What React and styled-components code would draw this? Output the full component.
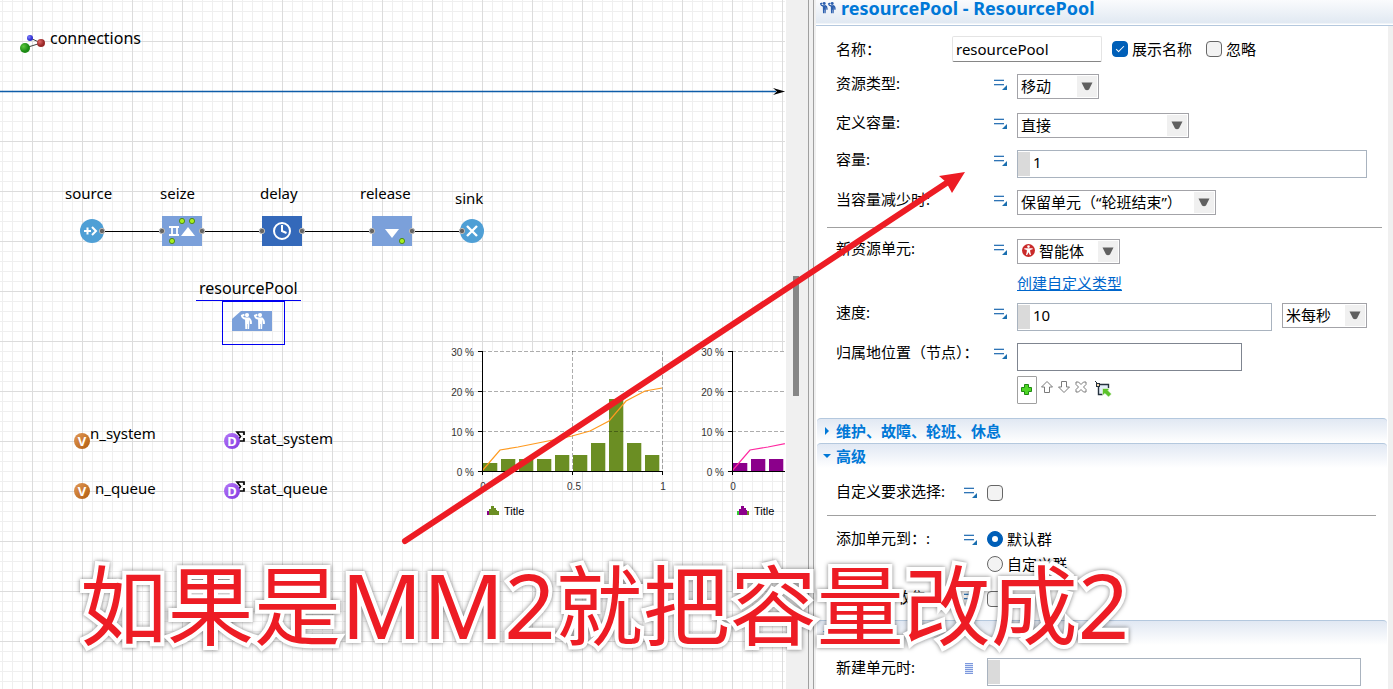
import React from "react";
import styled, { createGlobalStyle } from "styled-components";

const GlobalStyle = createGlobalStyle`
  *, *::before, *::after { box-sizing: border-box; }
  body {
    margin: 0;
    background: #fff;
    color: #000;
    font: 15px/20px "Noto Sans", "Noto Sans CJK SC", sans-serif;
  }
`;

const Workspace = styled.div`
  position: relative;
  display: flex;
  height: 100vh;
  overflow: hidden;
`;

/* ---------- model canvas ---------- */

const Canvas = styled.main`
  position: relative;
  flex: 785 1 0;
  min-width: 0;
  overflow: hidden;
  background-color: #fff;
  background-image:
    linear-gradient(to right, #dcdcdc 1px, transparent 1px),
    linear-gradient(to bottom, #dcdcdc 1px, transparent 1px),
    linear-gradient(to right, #efefef 1px, transparent 1px),
    linear-gradient(to bottom, #efefef 1px, transparent 1px);
  background-size: 50px 50px, 50px 50px, 10px 10px, 10px 10px;
  background-position: 32px 41px, 32px 41px, 2px 1px, 2px 1px;
`;

const Drawing = styled.svg`
  position: absolute;
  left: 0;
  top: 0;
  width: 100%;
  height: 100%;
  overflow: visible;
`;

const CanvasLabel = styled.span`
  position: absolute;
  left: ${(p) => p.$x}px;
  top: ${(p) => p.$y}px;
  font-size: ${(p) => (p.$large ? 16 : 15)}px;
  line-height: 20px;
  white-space: nowrap;
`;

const SelectedName = styled(CanvasLabel)`
  padding: 0 3px 1px;
  border-bottom: 1px solid #0000f0;
  line-height: 21px;
`;

const ChartBox = styled.figure`
  position: absolute;
  left: ${(p) => p.$x}px;
  top: ${(p) => p.$y}px;
  margin: 0;
  font-family: "Liberation Sans", sans-serif;
`;

const ChartSvg = styled.svg`
  display: block;
  overflow: visible;
  font-size: 10px;
  fill: #333;
`;

const Sash = styled.div`
  flex: none;
  display: flex;
  width: 31px;
  background: #f0f0f0;
  border-left: 1px solid #fff;
`;

const ScrollTrack = styled.div`
  width: 23px;
  padding: 276px 0 0 7px;
  border-right: 1px solid #a0a0a0;
`;

const ScrollThumb = styled.div`
  width: 6px;
  height: 120px;
  background: #868686;
`;

const SashEdge = styled.div`
  width: 5px;
  border-right: 1px solid #a0a0a0;
`;

/* ---------- properties panel ---------- */

const Panel = styled.aside`
  flex: 577 1 0;
  min-width: 0;
  background: #fff;
`;

const PanelHeader = styled.header`
  display: flex;
  align-items: flex-start;
  gap: 5px;
  height: 26px;
  padding-left: 4px;
  background: linear-gradient(#fafbfd, #e1e9f2 23px, #fff 24px, #fff);
  border-bottom: 1px solid #b4c8de;
`;

const PanelTitle = styled.h1`
  margin: 0;
  color: #0078d7;
  font-size: 18px;
  line-height: 16px;
  font-weight: 700;
  white-space: nowrap;
`;

const PanelBody = styled.div`
  min-height: calc(100vh - 26px);
  margin-right: 5px;
  box-shadow: 5px 0 0 #f0f0f0;
`;

const Group = styled.div`
  display: flex;
  flex-direction: column;
  padding: ${(p) => p.$top}px ${(p) => p.$right}px 0 20px;
`;

const Row = styled.div`
  display: grid;
  grid-template-columns: ${(p) => p.$label || 157}px 24px minmax(0, 1fr);
  align-items: start;
  margin-bottom: ${(p) => p.$after ?? 12}px;
`;

const NameRow = styled.div`
  display: flex;
  align-items: center;
  margin-bottom: 12px;
`;

const Label = styled.label`
  display: block;
  margin-top: -1px;
  white-space: nowrap;
`;

const NameLabel = styled(Label)`
  width: 116px;
`;

const ModeButton = styled.button`
  display: block;
  justify-self: start;
  padding: 0;
  margin: 5px 0 0 1px;
  border: 0;
  background: none;
  line-height: 0;
`;

const Controls = styled.div`
  display: flex;
  gap: ${(p) => p.$gap || 0}px;
  min-width: 0;
`;

const TextInput = styled.input`
  width: ${(p) => p.$width}px;
  height: ${(p) => p.$height || 28}px;
  padding: 0 3px;
  border: 1px solid #7f8590;
  background: #fff;
  font: inherit;
`;

const NameInput = styled(TextInput)`
  border-color: #e4e4e4;
  border-bottom-color: #868686;
  border-radius: 2px;
  margin-right: 10px;
`;

const CodeFrame = styled.div`
  flex: 1;
  display: flex;
  min-width: 0;
  height: 28px;
  padding: 1px 0;
  border: 1px solid #a9b3bf;
`;

const CodeGutter = styled.span`
  flex: none;
  width: 12px;
  background: #dadada;
`;

const CodeInput = styled.input`
  flex: 1;
  min-width: 0;
  height: 20px;
  padding: 0 3px;
  border: 0;
  background: none;
  font: inherit;
`;

const SelectFrame = styled.div`
  position: relative;
  flex: none;
  width: ${(p) => p.$width}px;
  height: 25px;
`;

const NativeSelect = styled.select`
  appearance: none;
  width: 100%;
  height: 100%;
  padding: 0 22px 2px ${(p) => (p.$icon ? 21 : 3)}px;
  border: 1px solid #a3a3a8;
  border-radius: 0;
  background: #fff;
  color: #000;
  font: inherit;
`;

const SelectArrow = styled.span`
  position: absolute;
  right: 2px;
  top: 2px;
  bottom: 2px;
  display: flex;
  align-items: center;
  justify-content: center;
  width: 20px;
  background: #f0f0f0;
  pointer-events: none;
`;

const SelectIcon = styled.span`
  position: absolute;
  left: 5px;
  top: 5px;
  line-height: 0;
  pointer-events: none;
`;

const Check = styled.input`
  appearance: none;
  flex: none;
  display: grid;
  place-content: center;
  width: 16px;
  height: 16px;
  margin: 0;
  border: 1px solid #666;
  border-radius: ${(p) => (p.type === "radio" ? 8 : 4)}px;
  background: #f3f3f3;
  &:checked {
    border-color: #005fb8;
    background: #005fb8;
  }
  &:checked::before {
    content: "";
    width: ${(p) => (p.type === "radio" ? 6 : 8)}px;
    height: ${(p) => (p.type === "radio" ? 6 : 4)}px;
    ${(p) =>
      p.type === "radio"
        ? "border-radius: 3px; background: #fff;"
        : "border: solid #fff; border-width: 0 0 1px 1px; transform: rotate(-45deg); margin-bottom: 2px;"}
  }
`;

const CheckLabel = styled.label`
  display: flex;
  align-items: center;
  gap: 4px;
  margin-right: 14px;
  white-space: nowrap;
`;

const RadioStack = styled.div`
  display: flex;
  flex-direction: column;
  gap: 5px;
`;

const CheckCell = styled.div`
  padding-top: 3px;
`;

const Link = styled.a`
  color: #0066cc;
  grid-column: 3;
  margin-top: -1px;
  text-decoration: underline;
`;

const ListTools = styled.div`
  grid-column: 3;
  display: flex;
  align-items: flex-start;
  gap: 3px;
`;

const ToolButton = styled.button`
  display: flex;
  padding: ${(p) => (p.$framed ? "6px 3px 0 2px" : "4px 0 0")};
  height: 28px;
  border: ${(p) => (p.$framed ? "1px solid #a0a0a0" : "0")};
  border-radius: 1px;
  background: none;
`;

const Rule = styled.hr`
  height: 1px;
  margin: 0 -15px ${(p) => p.$after}px -9px;
  border: 0;
  background: #a0a0a0;
`;

const SectionHead = styled.h2`
  margin: 0 1px 0 1px;
  height: 25px;
  border-top: 1px solid #b4c8de;
  border-radius: 4px 4px 0 0;
  background: linear-gradient(#e1e8f3, #fff);
  font-size: 15px;
`;

const SectionToggle = styled.button`
  display: flex;
  align-items: center;
  gap: 5px;
  width: 100%;
  height: 24px;
  padding: 0 0 1px 6px;
  border: 0;
  background: none;
  color: #0078d7;
  font: inherit;
  text-align: left;
`;

/* ---------- annotation over both panes ---------- */

const Annotation = styled.div`
  position: absolute;
  inset: 0;
  pointer-events: none;
`;

const Callout = styled.p`
  position: absolute;
  left: 80px;
  top: 541px;
  margin: 0;
  color: #ed1c24;
  font-size: 87px;
  line-height: 126px;
  white-space: nowrap;
  -webkit-text-stroke: 8px #fff;
  stroke-linejoin: round;
  paint-order: stroke fill;
  filter: drop-shadow(0 0 2px rgba(0, 0, 0, 0.5));
`;

const Latin = styled.span`
  font-size: 90px;
`;

/* ---------- drawings ---------- */

const Port = ({ x, y = 231 }) => (
  <circle cx={x} cy={y} r="2.7" fill="#666" stroke="#bbb" strokeWidth="1" />
);

const Slot = ({ x, y }) => (
  <circle cx={x} cy={y} r="2.6" fill="#a8f020" stroke="#4d8a1c" strokeWidth="1" />
);

const Worker = ({ x, y, s = 1 }) => (
  <g transform={`translate(${x} ${y}) scale(${s})`} fill="none" stroke="currentColor">
    <circle cx="6" cy="2.1" r="2.1" fill="currentColor" stroke="none" />
    <path d="M4 4.600H8.400V9.500L8.100 16H6.500V11H6V16H4.300Z" fill="currentColor" stroke="none" />
    <path d="M3.400 1.600L.9 2.600Q1.300 5.200 4.600 5.700M7.500 5.300Q10.400 6.500 9.900 11" strokeWidth="1.9" />
  </g>
);

const Badge = ({ x, y, letter, fill }) => (
  <g>
    <circle cx={x} cy={y} r="8" fill={fill} />
    <text x={x} y={y + 5} fill="#fff" textAnchor="middle" fontSize="13" fontWeight="700">
      {letter}
    </text>
  </g>
);

const Flowchart = () => (
  <Drawing aria-hidden="true">
    <defs>
      <radialGradient id="green" cx="35%" cy="35%">
        <stop offset="0" stopColor="#5cc83c" />
        <stop offset="1" stopColor="#1c8a14" />
      </radialGradient>
      <radialGradient id="red" cx="35%" cy="35%">
        <stop offset="0" stopColor="#e06868" />
        <stop offset="1" stopColor="#982828" />
      </radialGradient>
      <radialGradient id="blue" cx="35%" cy="35%">
        <stop offset="0" stopColor="#8080ff" />
        <stop offset="1" stopColor="#3030d0" />
      </radialGradient>
      <linearGradient id="orange" x1="0" y1="0" x2="1" y2="1">
        <stop offset="0" stopColor="#e39a58" />
        <stop offset="1" stopColor="#b05a0c" />
      </linearGradient>
      <linearGradient id="violet" x1="0" y1="0" x2="1" y2="1">
        <stop offset="0" stopColor="#b678f8" />
        <stop offset="1" stopColor="#8038e0" />
      </linearGradient>
    </defs>

    <path d="M25 48L41 43L30 38" fill="none" stroke="#444" />
    <circle cx="25" cy="48" r="5" fill="url(#green)" />
    <circle cx="41" cy="43" r="4" fill="url(#red)" />
    <circle cx="30" cy="38" r="3" fill="url(#blue)" />

    <path d="M0 91.5H776" stroke="#0e5ca8" strokeWidth="1.4" />
    <path d="M773 88L785 91.5L773 95L777 91.5Z" fill="#000" />

    <path d="M102 231.5H162M202 231.5H262M302 231.5H372M412 231.5H462" stroke="#000" />
    <circle cx="92" cy="231" r="12" fill="#4f9fd5" />
    <path d="M84 231H91M87.500 227.500V234.500M92 227L96 231L92 235" stroke="#fff" strokeWidth="2" fill="none" />
    <Port x={102} />

    <rect x="162" y="216" width="40" height="30" fill="#7ba0da" />
    <path d="M169 227H179M169 235H179M172 227V235M177 227V235" stroke="#fff" strokeWidth="1.8" />
    <path d="M181 236L188 227L195 236Z" fill="#fff" />
    <Slot x={182} y={221} />
    <Slot x={192} y={221} />
    <Slot x={172} y={241} />
    <Port x={162} />
    <Port x={202} />

    <rect x="262" y="216" width="40" height="30" fill="#3469ba" />
    <circle cx="282" cy="231" r="8" fill="none" stroke="#fff" strokeWidth="2" />
    <path d="M282 225V231L286.500 233" fill="none" stroke="#fff" strokeWidth="2" />
    <Port x={262} />
    <Port x={302} />

    <rect x="372" y="216" width="40" height="30" fill="#7ba0da" />
    <path d="M385 229H399L392 238Z" fill="#fff" />
    <Slot x={402} y={241} />
    <Port x={372} />
    <Port x={412} />

    <circle cx="472" cy="231" r="12" fill="#4f9fd5" />
    <path d="M467 226L477 236M477 226L467 236" stroke="#fff" strokeWidth="2.4" />
    <Port x={462} />

    <rect x="222.500" y="301.500" width="62" height="43" fill="none" stroke="#0000f0" />
    <path d="M241 311H272V331H232V319Z" fill="#7ba0da" />
    <g color="#fff">
      <Worker x={241} y={313} />
      <Worker x={254} y={313} />
    </g>

    <Badge x={82} y={441} letter="V" fill="url(#orange)" />
    <Badge x={82} y={491} letter="V" fill="url(#orange)" />
    {[441, 491].map((y) => (
      <g key={y}>
        <path d={`M244 ${y - 6}V${y - 9}H237L240.500 ${y - 4.5}L237 ${y}H244V${y - 3}`} fill="none" stroke="#000" strokeWidth="1.7" />
        <Badge x={232} y={y} letter="D" fill="url(#violet)" />
      </g>
    ))}
  </Drawing>
);

const BARS = [2, 3, 3, 3, 4, 4, 7, 18, 7, 4];
const CDF = "0,120 18,99 36,96 71,89 90,85 108,80 127,70 144,50 163,40 180,37";

const Histogram = ({ x, y, color, shade, line, spare, title }) => (
  <ChartBox $x={x} $y={y}>
    <ChartSvg width="225" height="180" role="img" aria-label={title}>
      <g transform="translate(32 6)">
        <rect x="0" y="0" width="180" height="120" fill="#fff" />
        {BARS.map((v, i) => (
          <g key={i}>
            <rect x={i * 18 + 1} y={120 - v * 4} width="15" height={v * 4} fill={shade} />
            <rect x={i * 18 + 1} y={120 - v * 4} width="14" height={v * 4} fill={color} />
          </g>
        ))}
        <path
          d="M0 .5H180M0 40.500H180M0 80.500H180M90.500 0V120M180.500 0V120"
          stroke="#000"
          strokeOpacity=".32"
          strokeDasharray="4 2"
        />
        <polyline points={CDF} fill="none" stroke={line} strokeWidth="1.2" />
        <path d="M.5 0V124M-4 .5H0M-4 40.500H0M-4 80.500H0M-4 120.500H181M90.500 120V124M180.500 120V124" stroke="#000" fill="none" />
        {[30, 20, 10, 0].map((t, i) => (
          <text key={t} x="-8" y={i * 40 + 5} textAnchor="end">
            {t} %
          </text>
        ))}
        <text x="1" y="139" textAnchor="middle">0</text>
        <text x="92" y="139" textAnchor="middle">0.5</text>
        <text x="181" y="139" textAnchor="middle">1</text>
        <path d="M5 164V160H7V164Z" fill={spare[0]} />
        <path d="M15 164V160H17V164Z" fill={spare[1]} />
        <path d="M7 164V158H9V155H12V157H14V159H15V164Z" fill={color} />
        <text x="22" y="164" fontSize="11" fill="#000">{title}</text>
      </g>
    </ChartSvg>
  </ChartBox>
);

const ValueMode = ({ label }) => (
  <ModeButton type="button" aria-label={label}>
    <svg width="14" height="12" viewBox="0 0 14 12">
      <path d="M0 1.500H10M0 5.500H10" stroke="#2f74b5" strokeWidth="1" />
      <path d="M0 .5H10M0 6.500H10" stroke="#bcd4ea" strokeWidth="1" />
      <path d="M13 6V11H8Z" fill="#1a6fb0" />
    </svg>
  </ModeButton>
);

const CodeMode = () => (
  <ModeButton type="button" aria-label="代码">
    <svg width="10" height="12" viewBox="0 0 10 12">
      <rect x="1" width="8" height="11" fill="#dce6fa" />
      <path d="M1 .5H9M1 2.500H9M1 4.500H9M1 6.500H9M1 8.500H9M1 10.500H9" stroke="#7d98dc" strokeWidth="1" />
    </svg>
  </ModeButton>
);

const Select = ({ id, width, value, icon }) => (
  <SelectFrame $width={width}>
    <NativeSelect id={id} $icon={!!icon} defaultValue={value} aria-label={value}>
      <option>{value}</option>
    </NativeSelect>
    {icon && <SelectIcon>{icon}</SelectIcon>}
    <SelectArrow>
      <svg width="12" height="9" viewBox="0 0 12 9">
        <path d="M.5.5H11.500L8 7.500Q6 9 4 7.500Z" fill="#606060" />
      </svg>
    </SelectArrow>
  </SelectFrame>
);

const Code = ({ id, value }) => (
  <CodeFrame>
    <CodeGutter />
    <CodeInput id={id} defaultValue={value} />
  </CodeFrame>
);

const AgentIcon = () => (
  <svg width="13" height="13" viewBox="0 0 13 13">
    <circle cx="6.500" cy="6.500" r="6.500" fill="#c92a2a" />
    <circle cx="6.500" cy="2.600" r="1.300" fill="#fff" />
    <path d="M2.300 4.300H10.700V5.300L8.200 6V7.500L9 11H7.800L6.500 8.200L5.200 11H4L4.800 7.500V6L2.300 5.300Z" fill="#fff" />
  </svg>
);

const Section = ({ title, open }) => (
  <SectionHead>
    <SectionToggle type="button" aria-expanded={!!open}>
      <svg width="8" height="8" viewBox="0 0 8 8">
        <path d={open ? "M0 2H8L4 6Z" : "M2 0L6 4L2 8Z"} fill="#0078d7" />
      </svg>
      {title}
    </SectionToggle>
  </SectionHead>
);

export default function App() {
  return (
    <Workspace>
      <GlobalStyle />
      <Canvas>
        <Flowchart />
        <CanvasLabel $x={50} $y={28} $large>connections</CanvasLabel>
        <CanvasLabel $x={65} $y={183}>source</CanvasLabel>
        <CanvasLabel $x={160} $y={183}>seize</CanvasLabel>
        <CanvasLabel $x={260} $y={183}>delay</CanvasLabel>
        <CanvasLabel $x={360} $y={183}>release</CanvasLabel>
        <CanvasLabel $x={455} $y={188}>sink</CanvasLabel>
        <SelectedName $x={196} $y={278} $large>resourcePool</SelectedName>
        <CanvasLabel $x={90} $y={423}>n_system</CanvasLabel>
        <CanvasLabel $x={95} $y={478}>n_queue</CanvasLabel>
        <CanvasLabel $x={250} $y={428}>stat_system</CanvasLabel>
        <CanvasLabel $x={250} $y={478}>stat_queue</CanvasLabel>
        <Histogram x={450} y={345} color="#6b8e23" shade="#d3ddbd" line="#ff9a1f" spare={["#8b008b", "#6b8e23"]} title="Title" />
        <Histogram x={700} y={345} color="#8b008b" shade="#dcb3dc" line="#ff28a0" spare={["#32cd32", "#6b8e23"]} title="Title" />
      </Canvas>

      <Sash>
        <ScrollTrack>
          <ScrollThumb />
        </ScrollTrack>
        <SashEdge />
      </Sash>

      <Panel>
        <PanelHeader>
          <svg width="16" height="16" viewBox="0 0 16 16" color="#2c5fae">
            <Worker x={0} y={2} s={0.7} />
            <Worker x={8} y={2} s={0.7} />
          </svg>
          <PanelTitle>resourcePool - ResourcePool</PanelTitle>
        </PanelHeader>

        <PanelBody>
          <Group $top={10} $right={21}>
            <NameRow>
              <NameLabel htmlFor="name">名称：</NameLabel>
              <NameInput id="name" $width={150} $height={26} defaultValue="resourcePool" />
              <CheckLabel>
                <Check type="checkbox" defaultChecked />
                展示名称
              </CheckLabel>
              <CheckLabel>
                <Check type="checkbox" />
                忽略
              </CheckLabel>
            </NameRow>
            <Row $after={14}>
              <Label htmlFor="type">资源类型:</Label>
              <ValueMode label="资源类型" />
              <Select id="type" width={82} value="移动" />
            </Row>
            <Row>
              <Label htmlFor="defined">定义容量:</Label>
              <ValueMode label="定义容量" />
              <Select id="defined" width={172} value="直接" />
            </Row>
            <Row>
              <Label htmlFor="capacity">容量:</Label>
              <ValueMode label="容量" />
              <Code id="capacity" value="1" />
            </Row>
            <Row>
              <Label htmlFor="decrease">当容量减少时:</Label>
              <ValueMode label="当容量减少时" />
              <Select id="decrease" width={199} value="保留单元（“轮班结束”）" />
            </Row>
            <Rule $after={11} />
            <Row $after={10}>
              <Label htmlFor="unit">新资源单元:</Label>
              <ValueMode label="新资源单元" />
              <Select id="unit" width={103} value="智能体" icon={<AgentIcon />} />
            </Row>
            <Row $after={10}>
              <Link href="#create">创建自定义类型</Link>
            </Row>
            <Row>
              <Label htmlFor="speed">速度:</Label>
              <ValueMode label="速度" />
              <Controls $gap={10}>
                <Code id="speed" value="10" />
                <Select id="speedUnit" width={85} value="米每秒" />
              </Controls>
            </Row>
            <Row $after={5}>
              <Label htmlFor="home">归属地位置（节点）：</Label>
              <ValueMode label="归属地位置" />
              <TextInput id="home" $width={225} />
            </Row>
            <Row $after={14}>
              <ListTools>
                <ToolButton type="button" $framed aria-label="添加">
                  <svg width="13" height="13" viewBox="0 0 13 13">
                    <path d="M4.500 1.500H8.500V4.500H11.500V8.500H8.500V11.500H4.500V8.500H1.500V4.500H4.500Z" fill="#4fd626" stroke="#1f8a10" />
                  </svg>
                </ToolButton>
                <ToolButton type="button" aria-label="上移">
                  <svg width="14" height="14" viewBox="0 0 14 14">
                    <path d="M7 1.500L12.500 7H9.500V12.500H4.500V7H1.500Z" fill="#fff" stroke="#7a7a7a" />
                  </svg>
                </ToolButton>
                <ToolButton type="button" aria-label="下移">
                  <svg width="14" height="14" viewBox="0 0 14 14">
                    <path d="M7 12.500L12.500 7H9.500V1.500H4.500V7H1.500Z" fill="#fff" stroke="#7a7a7a" />
                  </svg>
                </ToolButton>
                <ToolButton type="button" aria-label="删除">
                  <svg width="14" height="14" viewBox="0 0 14 14">
                    <path d="M2 2H4.500L7 4.500L9.500 2H12V4.500L9.500 7L12 9.500V12H9.500L7 9.500L4.500 12H2V9.500L4.500 7L2 4.500Z" fill="#fff" stroke="#7a7a7a" />
                  </svg>
                </ToolButton>
                <ToolButton type="button" aria-label="在图中选择">
                  <svg width="22" height="18" viewBox="0 0 22 18">
                    <path d="M7.500 4V14.500H17.500V4.500H7Z" fill="#e4eefa" stroke="none" />
                    <path d="M12 14.500H7.500V4.500H17.500V8" fill="none" stroke="#26323e" strokeWidth="1.400" />
                    <path d="M4 1L7 4" stroke="#26323e" />
                    <rect x="5.500" y="3.500" width="3" height="3" fill="#f5d9b0" stroke="#26323e" />
                    <path d="M11.500 8.500H18.500L17 10.500L20.500 14L17.500 17L14 13.500L11.500 15.500Z" fill="#5cc22b" stroke="#fff" strokeWidth=".5" />
                  </svg>
                </ToolButton>
              </ListTools>
            </Row>
          </Group>

          <Section title="维护、故障、轮班、休息" />
          <Section title="高级" open />

          <Group $top={14} $right={27}>
            <Row $label={127} $after={14}>
              <Label htmlFor="custom">自定义要求选择:</Label>
              <ValueMode label="自定义要求选择" />
              <CheckCell>
                <Check id="custom" type="checkbox" />
              </CheckCell>
            </Row>
            <Rule $after={13} />
            <Row $label={127} $after={14}>
              <Label as="span">添加单元到：:</Label>
              <ValueMode label="添加单元到" />
              <RadioStack>
                <CheckLabel>
                  <Check type="radio" name="population" defaultChecked />
                  默认群
                </CheckLabel>
                <CheckLabel>
                  <Check type="radio" name="population" />
                  自定义群
                </CheckLabel>
              </RadioStack>
            </Row>
            <Row $label={127} $after={13}>
              <Label htmlFor="stats">强制统计收集:</Label>
              <ValueMode label="强制统计收集" />
              <CheckCell>
                <Check id="stats" type="checkbox" />
              </CheckCell>
            </Row>
          </Group>

          <Section title="行动" open />

          <Group $top={13} $right={27}>
            <Row $label={127}>
              <Label htmlFor="onNew">新建单元时:</Label>
              <CodeMode />
              <Code id="onNew" value="" />
            </Row>
          </Group>
        </PanelBody>
      </Panel>

      <Annotation>
        <Drawing aria-hidden="true">
          <path d="M405 541L948 182" stroke="#ed1c24" strokeWidth="6" strokeLinecap="round" />
          <path d="M965 172L939 176L946 182L952 193Z" fill="#ed1c24" />
        </Drawing>
        <Callout>
          如果是<Latin>MM2</Latin>就把容量改成<Latin>2</Latin>
        </Callout>
      </Annotation>
    </Workspace>
  );
}
